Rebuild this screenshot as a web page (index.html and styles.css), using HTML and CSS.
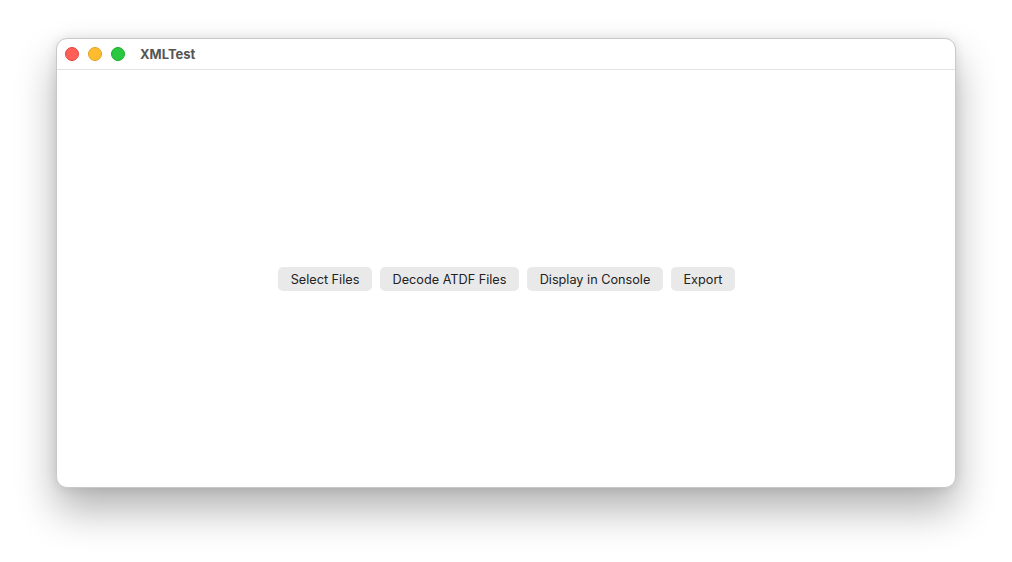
FILE: index.html
```html
<!DOCTYPE html>
<html>
<head>
<meta charset="utf-8">
<link rel="stylesheet" href="styles.css">
</head>
<body>
<div class="stage">
  <div class="window">
    <div class="titlebar">
      <div class="lights">
        <span class="light red"></span>
        <span class="light yellow"></span>
        <span class="light green"></span>
      </div>
      <div class="title">XMLTest</div>
    </div>
    <div class="content">
      <div class="buttons">
        <button class="btn w1">Select Files</button>
        <button class="btn w2">Decode ATDF Files</button>
        <button class="btn w3">Display in Console</button>
        <button class="btn w4">Export</button>
      </div>
    </div>
  </div>
</div>
</body>
</html>
```
FILE: styles.css
```css
html, body {
  margin: 0;
  padding: 0;
  background: #ffffff;
}
.stage {
  width: 1012px;
  height: 562px;
  padding: 38px 0 0 56px;
  box-sizing: border-box;
}
.window {
  width: 900px;
  height: 450px;
  box-sizing: border-box;
  border-radius: 11px;
  background: #ffffff;
  border: 1px solid #c9c9c9;
  box-shadow: 0 22px 40px rgba(0,0,0,0.30), 0 0 12px rgba(0,0,0,0.10);
  display: flex;
  flex-direction: column;
  overflow: hidden;
  font-family: Inter, "Liberation Sans", sans-serif;
}
.titlebar {
  height: 31px;
  flex: none;
  display: flex;
  align-items: center;
  border-bottom: 1px solid #e3e3e3;
  box-sizing: border-box;
  padding-left: 8px;
}
.lights {
  display: flex;
  gap: 9px;
}
.light {
  width: 14px;
  height: 14px;
  border-radius: 50%;
  box-sizing: border-box;
}
.red { background: #ff5f57; border: 0.5px solid #e0443e; }
.yellow { background: #febc2e; border: 0.5px solid #dea123; }
.green { background: #28c840; border: 0.5px solid #1aab29; }
.title {
  margin-left: 15px;
  font-size: 13px;
  font-weight: 700;
  color: #555555;
}
.content {
  flex: 1;
  display: flex;
  align-items: center;
  justify-content: center;
  padding-left: 1px;
}
.buttons {
  display: flex;
  gap: 8px;
}
.btn {
  height: 24px;
  border: none;
  border-radius: 5px;
  background: #e9e9e9;
  color: #222222;
  font-family: Inter, "Liberation Sans", sans-serif;
  font-size: 12.7px;
  padding: 1px 0 0 0;
  text-align: center;
}
.w1 { width: 94px; }
.w2 { width: 139px; }
.w3 { width: 136px; }
.w4 { width: 64px; }
```
